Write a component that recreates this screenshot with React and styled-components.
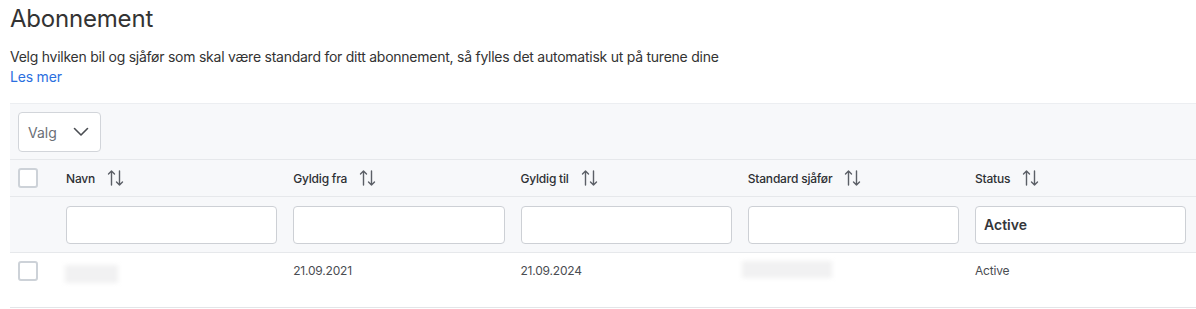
import React from "react";
import styled, { createGlobalStyle } from "styled-components";

const Global = createGlobalStyle`
  html, body { margin: 0; padding: 0; background: #fff; }
  body { font-family: Inter, "Noto Sans", sans-serif; color: #333; }
  * { box-sizing: border-box; }
`;

const Page = styled.div`
  padding: 0 0 0 10px;
  width: 1196px;
  overflow: hidden;
`;

const Title = styled.h1`
  margin: 0;
  padding-top: 3px;
  font-size: 24px;
  font-weight: 400;
  line-height: 32px;
  color: #333;
  letter-spacing: -0.2px;
`;

const Desc = styled.p`
  margin: 12px 0 0;
  font-size: 14px;
  line-height: 20px;
  color: #333;
  letter-spacing: -0.25px;
`;

const Link = styled.a`
  display: block;
  font-size: 14px;
  line-height: 20px;
  color: #2b6fe0;
  text-decoration: none;
  letter-spacing: -0.2px;
`;

const Table = styled.div`
  margin-top: 16px;
  width: 1186px;
  border-top: 1px solid #eceef1;
`;

const Toolbar = styled.div`
  background: #f7f8fa;
  padding: 8px 8px 7px;
  border-bottom: 1px solid #e6e8eb;
`;

const Select = styled.div`
  width: 83px;
  height: 40px;
  background: #fff;
  border: 1px solid #d2d5da;
  border-radius: 4px;
  display: flex;
  align-items: center;
  justify-content: space-between;
  padding: 0 11px 0 9px;
  font-size: 14px;
  color: #6b6f75;
`;

const Row = styled.div`
  display: grid;
  grid-template-columns: 48px repeat(5, 227.25px) 1fr;
  align-items: ${(p) => p.$align || "center"};
  height: ${(p) => p.$h}px;
  background: ${(p) => p.$bg || "#fff"};
  border-bottom: 1px solid ${(p) => p.$line || "#e6e8eb"};
  padding-top: ${(p) => p.$pt || 0}px;
`;

const Cell = styled.div`
  padding: 0 8px;
  display: flex;
  align-items: center;
  font-size: 12px;
  color: #333;
`;

const HeadLabel = styled.span`
  font-size: 12px;
  font-weight: 500;
  color: #2e3034;
  letter-spacing: -0.2px;
`;

const SortIcon = styled.svg`
  margin-left: 12px;
  flex: none;
`;

const Check = styled.div`
  width: 20px;
  height: 20px;
  border: 2px solid #cdd2d8;
  border-radius: 3px;
  background: #fff;
`;

const Input = styled.div`
  width: 100%;
  height: 38px;
  background: #fff;
  border: 1px solid #cdd0d5;
  border-radius: 4px;
  display: flex;
  align-items: center;
  padding: 0 8px;
  font-size: 14px;
  font-weight: 600;
  color: #34363a;
`;

const Blur = styled.div`
  width: ${(p) => p.$w}px;
  height: ${(p) => p.$h}px;
  background: #f1f1f2;
  filter: blur(2px);
  margin-left: ${(p) => p.$ml || 0}px;
  margin-top: ${(p) => p.$mt || 0}px;
`;

const DataText = styled.span`
  margin-top: 2px;
  font-size: 12px;
  color: #4a4d52;
  letter-spacing: -0.2px;
`;

const Sort = () => (
  <SortIcon width="18" height="18" viewBox="0 0 18 18" fill="none" stroke="#5b5f66" strokeWidth="1.4" strokeLinecap="round" strokeLinejoin="round">
    <path d="M4.5 16V2M1.5 5L4.5 2L7.5 5" />
    <path d="M12.5 2V16M9.5 13L12.5 16L15.5 13" />
  </SortIcon>
);

const Chevron = () => (
  <svg width="16" height="10" viewBox="0 0 16 10" fill="none" stroke="#4a4d52" strokeWidth="1.6" strokeLinecap="round" strokeLinejoin="round">
    <path d="M1.5 1.5L8 8L14.5 1.5" />
  </svg>
);

const columns = ["Navn", "Gyldig fra", "Gyldig til", "Standard sjåfør", "Status"];

export default function App() {
  return (
    <Page>
      <Global />
      <Title>Abonnement</Title>
      <Desc>Velg hvilken bil og sjåfør som skal være standard for ditt abonnement, så fylles det automatisk ut på turene dine</Desc>
      <Link href="#">Les mer</Link>
      <Table>
        <Toolbar>
          <Select>
            <span>Valg</span>
            <Chevron />
          </Select>
        </Toolbar>
        <Row $h={37} $bg="#f7f8fa">
          <Cell><Check /></Cell>
          {columns.map((c) => (
            <Cell key={c}>
              <HeadLabel>{c}</HeadLabel>
              <Sort />
            </Cell>
          ))}
        </Row>
        <Row $h={56} $bg="#f7f8fa">
          <Cell />
          {columns.map((c) => (
            <Cell key={c}>
              <Input>{c === "Status" ? "Active" : ""}</Input>
            </Cell>
          ))}
        </Row>
        <Row $h={55} $align="start" $pt={8} $line="#e3e5e8">
          <Cell><Check /></Cell>
          <Cell><Blur $w={53} $h={18} $mt={4} $ml={-1} /></Cell>
          <Cell><DataText>21.09.2021</DataText></Cell>
          <Cell><DataText>21.09.2024</DataText></Cell>
          <Cell><Blur $w={90} $h={17} $ml={-6} /></Cell>
          <Cell><DataText>Active</DataText></Cell>
        </Row>
      </Table>
    </Page>
  );
}
